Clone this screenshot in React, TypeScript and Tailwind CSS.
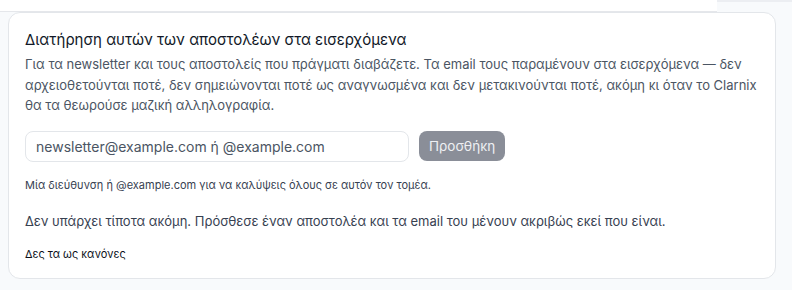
export default function App() {
  return (
    <div className="min-h-[290px] w-[792px] bg-[#f8fafc] font-['Inter',sans-serif]">
      <div className="flex h-[12px] items-start">
        <div className="h-[12px] w-[770px] border-b border-[#e5e7eb] bg-white" />
        <div className="ml-auto h-[2px] w-[80px] bg-[#eceef2]" />
      </div>
      <div className="ml-2 w-[768px] rounded-xl border border-[#e3e6ea] bg-white px-4 pt-[15px] pb-[16px]">
        <h3 className="text-[15px] leading-6 text-[#111827]">
          Διατήρηση αυτών των αποστολέων στα εισερχόμενα
        </h3>
        <p className="mt-[2px] text-[13px] leading-[20.5px] text-[#4b5563]">
          Για τα newsletter και τους αποστολείς που πράγματι διαβάζετε. Τα email τους παραμένουν στα
          εισερχόμενα — δεν αρχειοθετούνται ποτέ, δεν σημειώνονται ποτέ ως αναγνωσμένα και δεν
          μετακινούνται ποτέ, ακόμη κι όταν το Clarnix θα τα θεωρούσε μαζική αλληλογραφία.
        </p>
        <form className="mt-[15px] flex items-center gap-[10px]" onSubmit={(e) => e.preventDefault()}>
          <input
            type="text"
            placeholder="newsletter@example.com ή @example.com"
            className="h-[31px] w-[384px] rounded-lg border border-[#e3e6ea] px-[10px] text-[14px] text-[#111827] placeholder:text-[#4b5563] focus:outline-none"
          />
          <button
            type="submit"
            className="h-[30px] rounded-lg bg-[#8a8e98] px-[10px] text-[13.5px] text-[#eef0f3]"
          >
            Προσθήκη
          </button>
        </form>
        <p className="mt-[15px] text-[11px] leading-4 text-[#374151]">
          Μία διεύθυνση ή @example.com για να καλύψεις όλους σε αυτόν τον τομέα.
        </p>
        <p className="mt-[18px] text-[13px] leading-5 text-[#374151]">
          Δεν υπάρχει τίποτα ακόμη. Πρόσθεσε έναν αποστολέα και τα email του μένουν ακριβώς εκεί που είναι.
        </p>
        <button type="button" className="mt-[15px] block text-[11px] leading-4 text-[#0b0f19]">
          Δες τα ως κανόνες
        </button>
      </div>
    </div>
  );
}
